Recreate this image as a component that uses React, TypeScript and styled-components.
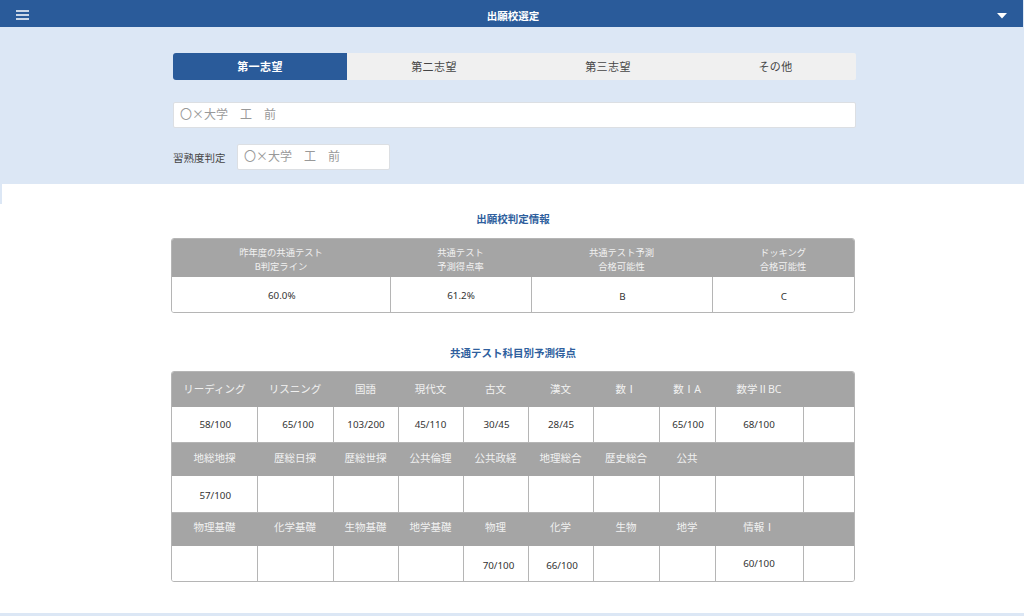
import React from "react";
import styled, { createGlobalStyle } from "styled-components";

const GlobalStyle = createGlobalStyle`
  html, body {
    margin: 0;
    padding: 0;
    background: #dce7f5;
    font-family: "Noto Sans", "Noto Sans CJK JP", sans-serif;
    color: #333;
  }
`;

const Page = styled.div`
  width: 1024px;
  height: 616px;
  overflow: hidden;
  display: flex;
  flex-direction: column;
`;

const Header = styled.header`
  box-sizing: border-box;
  width: 1023px;
  height: 27px;
  background: #2a5b9a;
  display: flex;
  align-items: center;
  justify-content: space-between;
  padding: 3px 16px 0 16px;
  flex: none;
`;

const HeaderTitle = styled.h1`
  margin: 0;
  font-size: 10.5px;
  font-weight: 700;
  color: #fff;
`;

const MenuIcon = styled.svg`
  width: 13px;
  height: 10px;
  display: block;
`;

const CaretIcon = styled.svg`
  width: 10px;
  height: 7px;
  display: block;
`;

const TopBand = styled.section`
  height: 157px;
  flex: none;
  box-sizing: border-box;
  padding: 26px 168px 0 173px;
  display: flex;
  flex-direction: column;
`;

const Tabs = styled.div`
  display: grid;
  grid-template-columns: 174px 174px 174px 161px;
  height: 27px;
  background: #f0f0f0;
  border-radius: 2px;
`;

const Tab = styled.div<{ $active?: boolean }>`
  display: flex;
  align-items: center;
  justify-content: center;
  padding-bottom: 1px;
  font-size: 11px;
  font-weight: ${(p) => (p.$active ? 700 : 400)};
  letter-spacing: 0.4px;
  color: ${(p) => (p.$active ? "#fff" : "#444")};
  background: ${(p) => (p.$active ? "#2a5b9a" : "transparent")};
  border-radius: ${(p) => (p.$active ? "3px 0 0 3px" : "0")};
`;

const TextBox = styled.div<{ $narrow?: boolean }>`
  box-sizing: border-box;
  width: ${(p) => (p.$narrow ? "153px" : "683px")};
  height: 26px;
  background: #fff;
  border: 1px solid #dcdfe3;
  border-radius: 2px;
  padding: 0 0 3px 6px;
  display: flex;
  align-items: center;
  font-family: "Noto Sans CJK JP", sans-serif;
  font-size: 12px;
  color: #999;
  white-space: pre;
`;

const MainBox = styled(TextBox)`
  margin-top: 22px;
`;

const LevelRow = styled.div`
  display: flex;
  align-items: center;
  gap: 11px;
  margin-top: 16px;
`;

const LevelLabel = styled.span`
  font-size: 10.5px;
  color: #444;
  width: 53px;
`;

const Content = styled.main`
  height: 429px;
  flex: none;
  background: #fff;
  position: relative;
  padding-left: 171px;
  &::before {
    content: "";
    position: absolute;
    left: 0;
    top: 0;
    width: 2px;
    height: 20px;
    background: #dce7f5;
  }
`;

const SectionTitle = styled.h2`
  width: 684px;
  margin: 0;
  font-size: 10.5px;
  font-weight: 700;
  line-height: 14px;
  text-align: center;
  color: #2f5f9e;
`;

const JudgeTitle = styled(SectionTitle)`
  padding-top: 28px;
  padding-bottom: 12px;
`;

const ScoreTitle = styled(SectionTitle)`
  padding-top: 33px;
  padding-bottom: 11px;
`;

const TableFrame = styled.div`
  box-sizing: border-box;
  width: 684px;
  border: 1px solid #b5b5b5;
  border-radius: 3px;
  overflow: hidden;
`;

const Table = styled.table`
  width: 100%;
  table-layout: fixed;
  border-collapse: collapse;
`;

const HeadCell = styled.th<{ $h?: number; $pb?: number }>`
  background: #a5a5a5;
  color: #f1f1f1;
  font-weight: 400;
  text-align: center;
  padding: 0 0 ${(p) => p.$pb ?? 2}px;
  font-size: 10.5px;
  line-height: 15px;
  height: ${(p) => p.$h ?? 34}px;
  box-sizing: border-box;
`;

const JudgeHead = styled(HeadCell)`
  font-size: 9.3px;
  line-height: 14px;
  padding: 4px 0 0;
`;

const ValueCell = styled.td<{ $h?: number; $pl?: number; $pt?: number }>`
  height: ${(p) => p.$h ?? 35}px;
  box-sizing: border-box;
  padding: ${(p) => p.$pt ?? 0}px 0 0 ${(p) => p.$pl ?? 0}px;
  text-align: center;
  font-size: 9.8px;
  color: #333;
  border-left: 1px solid #b5b5b5;
  border-bottom: 1px solid #b5b5b5;
  background: #fff;
  &:first-child {
    border-left: 0;
  }
  tr:last-child & {
    border-bottom: 0;
  }
`;

const judgeWidths = [218, 141, 181, 142];
const judgeHeads: [string, string][] = [
  ["昨年度の共通テスト", "B判定ライン"],
  ["共通テスト", "予測得点率"],
  ["共通テスト予測", "合格可能性"],
  ["ドッキング", "合格可能性"],
];
const judgeValues: { text: string; pt: number; pl: number }[] = [
  { text: "60.0%", pt: 2, pl: 2 },
  { text: "61.2%", pt: 2, pl: 1 },
  { text: "B", pt: 4, pl: 2 },
  { text: "C", pt: 4, pl: 1 },
];

type ScoreValue = { text: string; pl?: number; pt?: number };

const v = (text: string, pl?: number, pt?: number): ScoreValue => ({ text, pl, pt });
const none = v("");

const scoreWidths = [85, 76, 65, 65, 65, 65, 66, 56, 88, 51];
const scoreRows: { heads: string[]; values: ScoreValue[]; h: number; v: number; pb: number }[] = [
  {
    heads: ["リーディング", "リスニング", "国語", "現代文", "古文", "漢文", "数Ⅰ", "数ⅠA", "数学ⅡBC", ""],
    values: [
      v("58/100", 2),
      v("65/100", 6),
      v("103/200", 1),
      v("45/110"),
      v("30/45", 2),
      v("28/45", 1),
      none,
      v("65/100", 2),
      v("68/100"),
      none,
    ],
    h: 35,
    v: 35,
    pb: 0,
  },
  {
    heads: ["地総地探", "歴総日探", "歴総世探", "公共倫理", "公共政経", "地理総合", "歴史総合", "公共", "", ""],
    values: [v("57/100", 2, 4), none, none, none, none, none, none, none, none, none],
    h: 34,
    v: 36,
    pb: 2,
  },
  {
    heads: ["物理基礎", "化学基礎", "生物基礎", "地学基礎", "物理", "化学", "生物", "地学", "情報Ⅰ", ""],
    values: [
      none,
      none,
      none,
      none,
      v("70/100", 6, 4),
      v("66/100", 3, 4),
      none,
      none,
      v("60/100", 0, 0),
      none,
    ],
    h: 34,
    v: 35,
    pb: 4,
  },
];

export default function App() {
  return (
    <Page>
      <GlobalStyle />
      <Header>
        <MenuIcon viewBox="0 0 13 10">
          <path d="M0 1h13M0 5h13M0 9h13" stroke="#fff" strokeWidth="1.4" />
        </MenuIcon>
        <HeaderTitle>出願校選定</HeaderTitle>
        <CaretIcon viewBox="0 0 10 7">
          <path d="M0 1h10L5 6.5z" fill="#fff" />
        </CaretIcon>
      </Header>
      <TopBand>
        <Tabs>
          <Tab $active>第一志望</Tab>
          <Tab>第二志望</Tab>
          <Tab>第三志望</Tab>
          <Tab>その他</Tab>
        </Tabs>
        <MainBox>〇×大学　工　前</MainBox>
        <LevelRow>
          <LevelLabel>習熟度判定</LevelLabel>
          <TextBox $narrow>〇×大学　工　前</TextBox>
        </LevelRow>
      </TopBand>
      <Content>
        <JudgeTitle>出願校判定情報</JudgeTitle>
        <TableFrame>
          <Table>
            <colgroup>
              {judgeWidths.map((w, i) => (
                <col key={i} width={w} />
              ))}
            </colgroup>
            <tbody>
              <tr>
                {judgeHeads.map(([a, b]) => (
                  <JudgeHead key={a + b} $h={38}>
                    {a}
                    <br />
                    {b}
                  </JudgeHead>
                ))}
              </tr>
              <tr>
                {judgeValues.map((c) => (
                  <ValueCell key={c.text} $h={35} $pt={c.pt} $pl={c.pl}>
                    {c.text}
                  </ValueCell>
                ))}
              </tr>
            </tbody>
          </Table>
        </TableFrame>
        <ScoreTitle>共通テスト科目別予測得点</ScoreTitle>
        <TableFrame>
          <Table>
            <colgroup>
              {scoreWidths.map((w, i) => (
                <col key={i} width={w} />
              ))}
            </colgroup>
            <tbody>
              {scoreRows.map((row, r) => (
                <React.Fragment key={r}>
                  <tr>
                    {row.heads.map((t, i) => (
                      <HeadCell key={i} $h={row.h} $pb={row.pb}>
                        {t}
                      </HeadCell>
                    ))}
                  </tr>
                  <tr>
                    {row.values.map((c, i) => (
                      <ValueCell key={i} $h={row.v} $pl={c.pl} $pt={c.pt}>
                        {c.text}
                      </ValueCell>
                    ))}
                  </tr>
                </React.Fragment>
              ))}
            </tbody>
          </Table>
        </TableFrame>
      </Content>
    </Page>
  );
}
